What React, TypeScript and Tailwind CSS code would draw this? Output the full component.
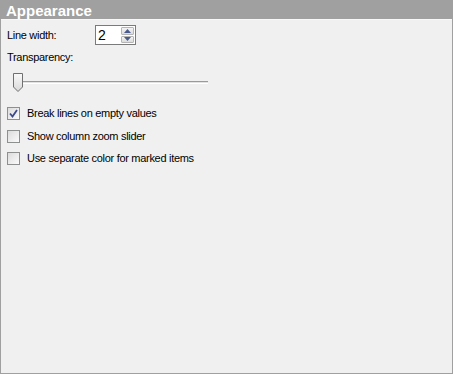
export default function App() {
  const rows = [
    { label: "Break lines on empty values", checked: true },
    { label: "Show column zoom slider", checked: false },
    { label: "Use separate color for marked items", checked: false },
  ];

  return (
    <div
      className="w-[453px] h-[374px] bg-[#f0f0f0] border border-[#a0a0a0] flex flex-col text-[11px] tracking-[-0.3px] text-black"
      style={{ fontFamily: "'Liberation Sans', Arial, sans-serif" }}
    >
      {/* Header */}
      <div className="h-[19px] bg-[#a0a0a0] border-b border-[#f8f8f8] flex items-center pl-[5px] shrink-0">
        <span className="text-white font-bold text-[15px] leading-none tracking-normal">Appearance</span>
      </div>

      <div className="flex flex-col pl-[6px] pt-[5px]">
        {/* Line width */}
        <div className="flex items-center h-[20px]">
          <span className="w-[88px]">Line width:</span>
          <div className="flex w-[41px] h-[20px] bg-white border border-[#7a7a7a]">
            <span className="flex-1 pl-[2px] text-[14px] leading-[18px]">2</span>
            <div className="flex flex-col w-[15px] p-[1px] gap-[1px]">
              <div className="flex-1 flex items-center justify-center bg-gradient-to-b from-[#f4f4f4] to-[#dcdcdc] border border-[#b5b5b5] rounded-[1px]">
                <svg width="7" height="4" viewBox="0 0 7 4">
                  <path d="M0 4 L3.5 0 L7 4 Z" fill="#4a5a8a" />
                </svg>
              </div>
              <div className="flex-1 flex items-center justify-center bg-gradient-to-b from-[#f4f4f4] to-[#dcdcdc] border border-[#b5b5b5] rounded-[1px]">
                <svg width="7" height="4" viewBox="0 0 7 4">
                  <path d="M0 0 L3.5 4 L7 0 Z" fill="#4a5a8a" />
                </svg>
              </div>
            </div>
          </div>
        </div>

        {/* Transparency */}
        <div className="mt-[5px] leading-[14px]">Transparency:</div>
        <div className="relative h-[24px] mt-[7px] w-[201px]">
          <div className="absolute left-[10px] right-0 top-[10px] h-[3px] border-t border-[#9a9a9a] border-b border-b-white bg-[#e2e2e2]" />
          <svg className="absolute left-[5px] top-[1px]" width="12" height="21" viewBox="0 0 12 21">
            <defs>
              <linearGradient id="thumb" x1="0" y1="0" x2="0" y2="1">
                <stop offset="0" stopColor="#fafafa" />
                <stop offset="1" stopColor="#d8d8d8" />
              </linearGradient>
            </defs>
            <path d="M1.5 1.5 H10.5 V15 L6 19.5 L1.5 15 Z" fill="url(#thumb)" stroke="#707070" />
          </svg>
        </div>

        {/* Checkboxes */}
        <div className="flex flex-col mt-[12px] gap-[9.5px]">
          {rows.map((r) => (
            <div key={r.label} className="flex items-center h-[13px]">
              <div className="w-[13px] h-[13px] border border-[#8e8f8f] bg-gradient-to-br from-[#dcdcdc] to-[#fbfbfb] flex items-center justify-center">
                {r.checked && (
                  <svg width="9" height="9" viewBox="0 0 9 9">
                    <path d="M1 4.5 L3.5 7.5 L8 1" fill="none" stroke="#3c4a8c" strokeWidth="1.8" />
                  </svg>
                )}
              </div>
              <span className="ml-[7px]">{r.label}</span>
            </div>
          ))}
        </div>
      </div>
    </div>
  );
}
